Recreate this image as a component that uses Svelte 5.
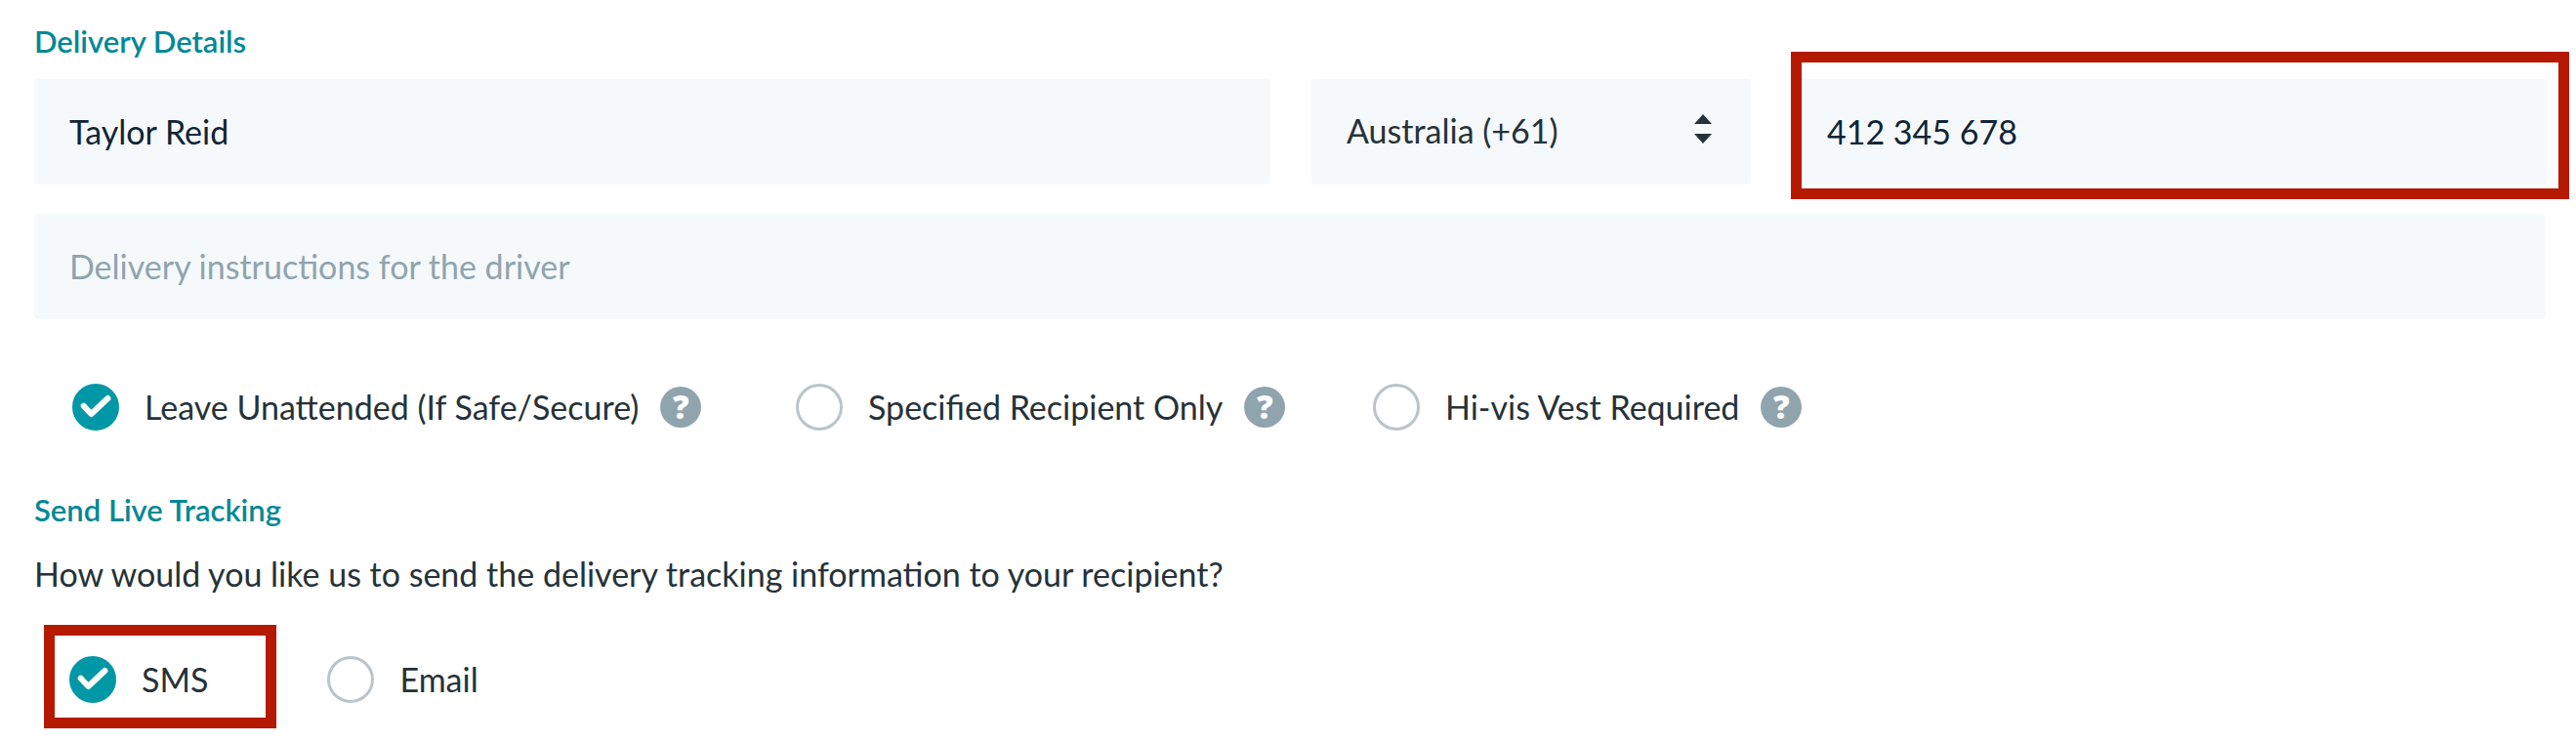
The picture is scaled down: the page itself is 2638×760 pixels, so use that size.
<script>
  let name = $state('Taylor Reid');
  let country = $state('+61');
  let phone = $state('412 345 678');
  let instructions = $state('');
  let tracking = $state('sms');

  const countries = [
    { code: '+61', label: 'Australia (+61)' },
    { code: '+64', label: 'New Zealand (+64)' },
    { code: '+44', label: 'United Kingdom (+44)' },
  ];

  let options = $state([
    { id: 'unattended', label: 'Leave Unattended (If Safe/Secure)', checked: true },
    { id: 'recipient', label: 'Specified Recipient Only', checked: false },
    { id: 'hivis', label: 'Hi-vis Vest Required', checked: false },
  ]);

  const channels = [
    { value: 'sms', label: 'SMS', highlight: true },
    { value: 'email', label: 'Email', highlight: false },
  ];
</script>

{#snippet tick()}
  <svg class="tick" viewBox="0 0 48 48" aria-hidden="true">
    <path d="M11.7 22.7 L19.4 31 L36.4 15" />
  </svg>
{/snippet}

<main>
  <section>
    <h2>Delivery Details</h2>

    <div class="fields">
      <input class="field" type="text" aria-label="Recipient name" bind:value={name} />

      <div class="select">
        <select class="field" aria-label="Country code" bind:value={country}>
          {#each countries as c}
            <option value={c.code}>{c.label}</option>
          {/each}
        </select>
        <svg class="arrows" viewBox="0 0 18 30" aria-hidden="true">
          <path d="M9 0 L18 10 H0 Z M9 30 L18 20 H0 Z" />
        </svg>
      </div>

      <div class="phone highlight">
        <input class="field" type="tel" aria-label="Phone number" bind:value={phone} />
      </div>
    </div>

    <input
      class="field instructions"
      type="text"
      aria-label="Delivery instructions"
      placeholder="Delivery instructions for the driver"
      bind:value={instructions}
    />

    <div class="options">
      {#each options as option}
        <div class="option">
          <label class="choice">
            <span class="mark">
              <input type="checkbox" bind:checked={option.checked} />
              {@render tick()}
            </span>
            <span class="text">{option.label}</span>
          </label>
          <button class="help" type="button" aria-label="About {option.label}">?</button>
        </div>
      {/each}
    </div>
  </section>

  <section>
    <h2>Send Live Tracking</h2>
    <p>How would you like us to send the delivery tracking information to your recipient?</p>

    <div class="channels">
      {#each channels as channel}
        <label class="choice" class:highlight={channel.highlight}>
          <span class="mark">
            <input type="radio" name="tracking" value={channel.value} bind:group={tracking} />
            {@render tick()}
          </span>
          <span class="text">{channel.label}</span>
        </label>
      {/each}
    </div>
  </section>
</main>

<style>
  :global(body) {
    background: #fff;
  }

  main {
    padding: 22px 29px 40px 35px;
    font-family: Lato, 'Open Sans', sans-serif;
    font-size: 34px;
    line-height: 40px;
    color: #263238;
  }

  h2 {
    margin: 0 0 19px;
    font-size: 31px;
    font-weight: 600;
    line-height: 40px;
    color: #008896;
  }

  .fields {
    display: grid;
    grid-template-columns: 1266fr 450fr 774fr;
    gap: 42px;
    margin-bottom: 30px;
  }

  .field {
    display: block;
    box-sizing: border-box;
    width: 100%;
    height: 108px;
    padding: 0 36px 2px;
    border: none;
    border-radius: 4px;
    background: #f5f9fc;
    font: inherit;
    color: #102536;
  }

  .field::placeholder {
    color: #90a4ae;
    opacity: 1;
  }

  .select,
  .phone {
    position: relative;
  }

  select.field {
    appearance: none;
    color: #263238;
  }

  .arrows {
    position: absolute;
    top: 36px;
    right: 40px;
    width: 18px;
    height: 30px;
    fill: #263238;
    pointer-events: none;
  }

  .highlight::after {
    content: '';
    position: absolute;
    border: 11px solid #b51a00;
    pointer-events: none;
  }

  .phone.highlight::after {
    inset: -28px -22px -15px -1px;
  }

  .instructions {
    width: calc(100% - 3px);
  }

  .options {
    display: grid;
    grid-template-columns: 741px 591px auto;
    margin: 66px 0 61px 39px;
  }

  .option {
    display: flex;
    align-items: center;
    gap: 22px;
  }

  .choice {
    display: flex;
    align-items: center;
    gap: 26px;
    position: relative;
  }

  .text {
    padding-bottom: 1px;
  }

  .mark {
    display: grid;
    width: 48px;
    height: 48px;
  }

  .mark input,
  .tick {
    grid-area: 1 / 1;
    width: 48px;
    height: 48px;
  }

  .mark input {
    appearance: none;
    box-sizing: border-box;
    margin: 0;
    border: 3px solid #bac4c9;
    border-radius: 50%;
  }

  .mark input:checked {
    border-color: #0097a7;
    background: #0097a7;
  }

  .tick {
    visibility: hidden;
    fill: none;
    stroke: #fff;
    stroke-width: 6;
    stroke-linecap: round;
    stroke-linejoin: round;
    pointer-events: none;
  }

  .mark input:checked + .tick {
    visibility: visible;
  }

  .help {
    width: 42px;
    height: 42px;
    padding: 0;
    border: none;
    border-radius: 50%;
    background: #90a4ae;
    color: #fff;
    font: 800 33px/42px 'Open Sans', Lato, sans-serif;
    cursor: pointer;
  }

  p {
    margin: 0;
    padding-top: 7px;
  }

  .channels {
    display: flex;
    gap: 122px;
    margin: 64px 0 0 36px;
  }

  .choice.highlight::after {
    inset: -32px -70px -26px -26px;
  }
</style>
